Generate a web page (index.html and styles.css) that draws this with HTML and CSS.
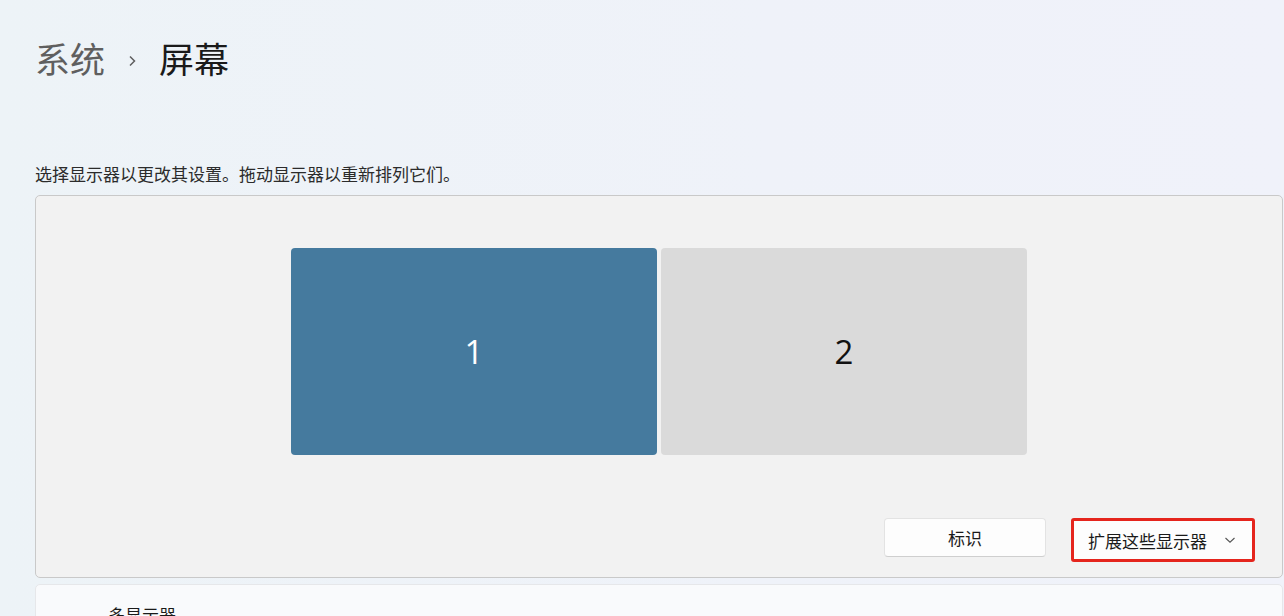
FILE: index.html
```html
<!DOCTYPE html>
<html lang="zh-CN">
  <head>
    <meta charset="UTF-8">
    <title>屏幕</title>
    <link rel="stylesheet" href="styles.css">
  </head>
  <body>
    <main class="page">
      <h1 class="crumbs">
        <span class="crumb-parent">系统</span>
        <svg class="crumb-sep" width="10" height="14" viewBox="0 0 10 14"><path d="M3 2.5 L7.5 7 L3 11.5" fill="none" stroke="#5f5f5f" stroke-width="1.5"/></svg>
        <span class="crumb-current">屏幕</span>
      </h1>

      <p class="hint">选择显示器以更改其设置。拖动显示器以重新排列它们。</p>

      <section class="arrange">
        <div class="monitors">
          <div class="monitor selected">1</div>
          <div class="monitor">2</div>
        </div>
        <div class="actions">
          <button class="btn">标识</button>
          <div class="select">
            <span>扩展这些显示器</span>
            <svg width="12" height="8" viewBox="0 0 12 8"><path d="M1.5 2 L6 6.2 L10.5 2" fill="none" stroke="#555" stroke-width="1.1"/></svg>
          </div>
        </div>
      </section>

      <section class="card">
        <span class="card-title">多显示器</span>
      </section>
    </main>
  </body>
</html>
```

FILE: styles.css
```css
html {
  font-family: "Noto Sans", "Noto Sans CJK SC", sans-serif;
}
body {
  margin: 0;
  height: 616px;
  overflow: hidden;
  background: linear-gradient(90deg, #edf3f7 0%, #eff2f9 60%, #f0f2fa 100%);
  color: #1a1a1a;
}
.page {
  padding: 0 1px 0 35px;
}
.crumbs {
  margin: 0;
  padding-top: 38px;
  height: 44px;
  display: flex;
  align-items: center;
  font-size: 35px;
  font-weight: 400;
  line-height: 44px;
}
.crumb-parent {
  color: #5f5f5f;
}
.crumb-sep {
  margin: 2px 22px 0 22px;
}
.crumb-current {
  color: #1a1a1a;
}
.hint {
  margin: 0;
  padding-top: 81px;
  font-size: 17px;
  line-height: 24px;
  color: #2b2b2b;
}
.arrange {
  margin-top: 8px;
  height: 381px;
  background: #f2f2f2;
  border: 1px solid #c9c9c9;
  border-radius: 5px;
  display: flex;
  flex-direction: column;
}
.monitors {
  margin-top: 52px;
  display: flex;
  justify-content: center;
  gap: 4px;
}
.monitor {
  width: 366px;
  height: 207px;
  border-radius: 4px;
  background: #dadada;
  display: flex;
  align-items: center;
  justify-content: center;
  font-family: "Open Sans", sans-serif;
  font-size: 33px;
  color: #111;
}
.monitor.selected {
  background: #457a9e;
  color: #fff;
}
.actions {
  margin-top: 63px;
  padding-right: 27px;
  display: flex;
  justify-content: flex-end;
  align-items: flex-start;
  gap: 25px;
}
.btn {
  width: 162px;
  height: 39px;
  background: #fdfdfd;
  border: 1px solid #e3e3e3;
  border-bottom-color: #cfcfcf;
  border-radius: 4px;
  font-family: inherit;
  font-size: 17px;
  color: #1a1a1a;
}
.select {
  box-sizing: border-box;
  width: 184px;
  height: 44px;
  padding: 0 16px 0 14px;
  border: 3px solid #e5251d;
  border-radius: 3px;
  background: #fdfdfd;
  display: flex;
  align-items: center;
  justify-content: space-between;
  font-size: 17px;
}
.card {
  margin-top: 6px;
  height: 60px;
  background: #f9fafc;
  border: 1px solid #e6e7ea;
  border-radius: 5px;
  padding-left: 72px;
}
.card-title {
  display: block;
  padding-top: 19px;
  font-size: 17px;
  line-height: 24px;
}
```
